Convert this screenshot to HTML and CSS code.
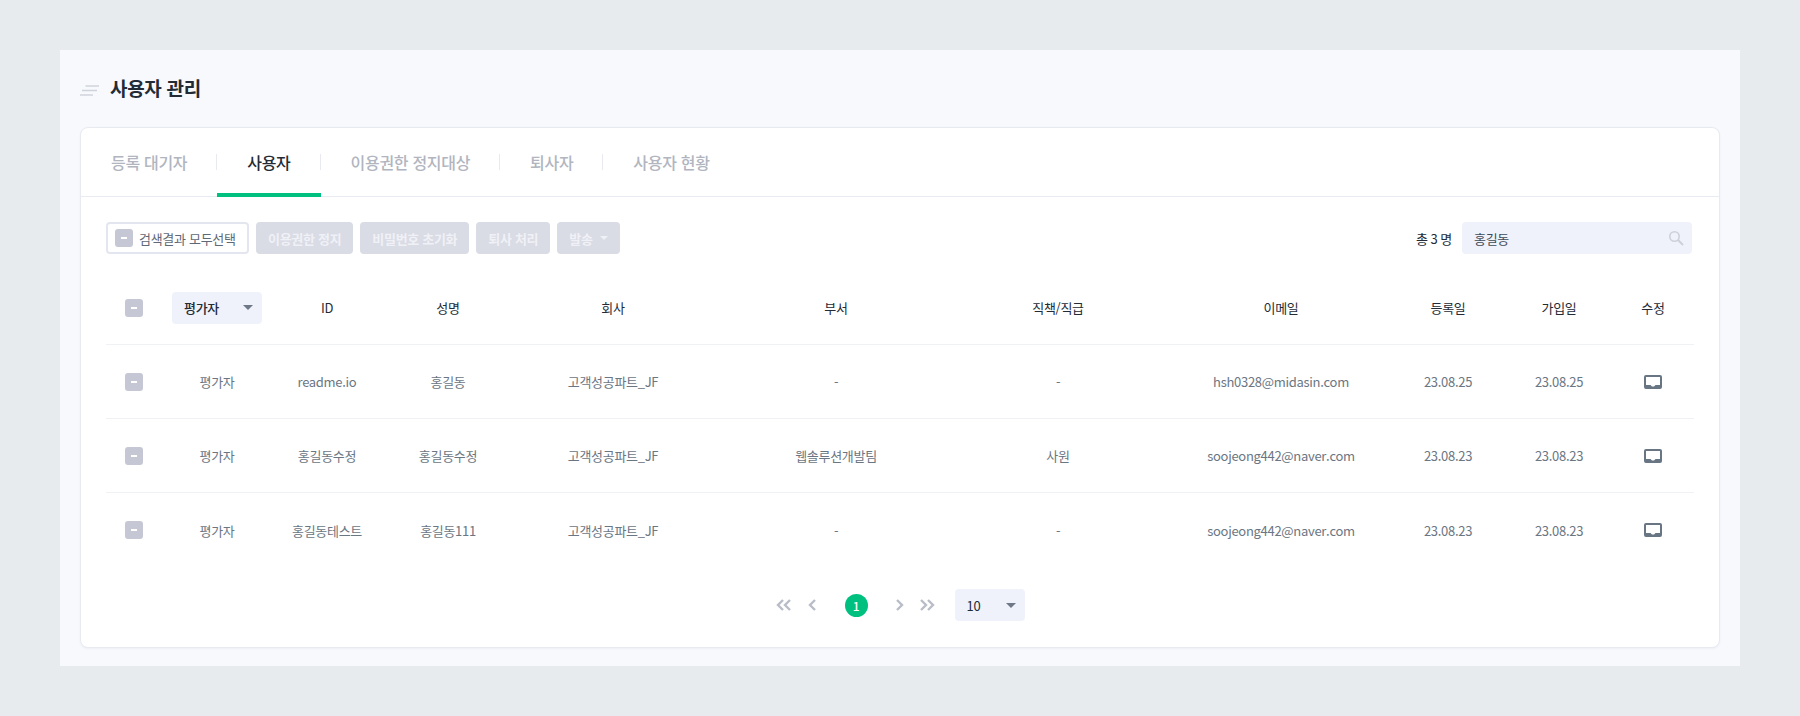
FILE: index.html
```html
<!DOCTYPE html>
<html lang="ko">
<head>
<meta charset="utf-8">
<title>사용자 관리</title>
<link rel="stylesheet" href="styles.css">
</head>
<body>
<main class="panel">
  <header class="page-head">
    <svg class="head-icon" width="19" height="11" viewBox="0 0 19 11"><path d="M5.500 1H19M2 5.500H17M0 10H13" stroke="#cfd3da" stroke-width="1.500" fill="none"/></svg>
    <h1>사용자 관리</h1>
  </header>
  <section class="card">
    <nav class="tabs">
      <a class="tab">등록 대기자</a>
      <a class="tab active">사용자</a>
      <a class="tab">이용권한 정지대상</a>
      <a class="tab">퇴사자</a>
      <a class="tab last">사용자 현황</a>
    </nav>
    <div class="body">
      <div class="toolbar">
        <label class="select-all"><span class="check"></span>검색결과 모두선택</label>
        <button class="btn">이용권한 정지</button>
        <button class="btn">비밀번호 초기화</button>
        <button class="btn">퇴사 처리</button>
        <button class="btn">발송<i class="caret caret-white"></i></button>
        <span class="total">총 3 명</span>
        <div class="search">
          <span>홍길동</span>
          <svg width="16" height="16" viewBox="0 0 16 16"><circle cx="6.500" cy="6.500" r="4.700" fill="none" stroke="#cdd0d9" stroke-width="1.600"/><path d="M10 10l5 5" stroke="#cdd0d9" stroke-width="2" fill="none"/></svg>
        </div>
      </div>
      <div class="row head">
        <div class="cell"><span class="check"></span></div>
        <div class="cell"><div class="role-select">평가자<i class="caret"></i></div></div>
        <div class="cell">ID</div><div class="cell">성명</div><div class="cell">회사</div><div class="cell">부서</div><div class="cell">직책/직급</div><div class="cell">이메일</div><div class="cell">등록일</div><div class="cell">가입일</div><div class="cell">수정</div>
      </div>
      <div class="row">
        <div class="cell"><span class="check"></span></div>
        <div class="cell">평가자</div><div class="cell">readme.io</div><div class="cell">홍길동</div><div class="cell">고객성공파트_JF</div><div class="cell">-</div><div class="cell">-</div><div class="cell">hsh0328@midasin.com</div><div class="cell">23.08.25</div><div class="cell">23.08.25</div>
        <div class="cell"><svg class="edit" width="18" height="14" viewBox="0 0 18 14"><path fill-rule="evenodd" d="M2 0H16a2 2 0 0 1 2 2V12a2 2 0 0 1-2 2H2a2 2 0 0 1-2-2V2a2 2 0 0 1 2-2ZM2 2V10H6.500L8 11.500H10L11.500 10H16V2Z" fill="#687583"/></svg></div>
      </div>
      <div class="row">
        <div class="cell"><span class="check"></span></div>
        <div class="cell">평가자</div><div class="cell">홍길동수정</div><div class="cell">홍길동수정</div><div class="cell">고객성공파트_JF</div><div class="cell">웹솔루션개발팀</div><div class="cell">사원</div><div class="cell">soojeong442@naver.com</div><div class="cell">23.08.23</div><div class="cell">23.08.23</div>
        <div class="cell"><svg class="edit" width="18" height="14" viewBox="0 0 18 14"><path fill-rule="evenodd" d="M2 0H16a2 2 0 0 1 2 2V12a2 2 0 0 1-2 2H2a2 2 0 0 1-2-2V2a2 2 0 0 1 2-2ZM2 2V10H6.500L8 11.500H10L11.500 10H16V2Z" fill="#687583"/></svg></div>
      </div>
      <div class="row no-line">
        <div class="cell"><span class="check"></span></div>
        <div class="cell">평가자</div><div class="cell">홍길동테스트</div><div class="cell">홍길동111</div><div class="cell">고객성공파트_JF</div><div class="cell">-</div><div class="cell">-</div><div class="cell">soojeong442@naver.com</div><div class="cell">23.08.23</div><div class="cell">23.08.23</div>
        <div class="cell"><svg class="edit" width="18" height="14" viewBox="0 0 18 14"><path fill-rule="evenodd" d="M2 0H16a2 2 0 0 1 2 2V12a2 2 0 0 1-2 2H2a2 2 0 0 1-2-2V2a2 2 0 0 1 2-2ZM2 2V10H6.500L8 11.500H10L11.500 10H16V2Z" fill="#687583"/></svg></div>
      </div>
      <div class="pager">
        <svg width="16" height="12" viewBox="0 0 16 12"><path d="M7 1L2 6l5 5M14 1L9 6l5 5" stroke="#b9bdc7" stroke-width="2.400" fill="none"/></svg>
        <svg class="p-prev" width="9" height="12" viewBox="0 0 9 12"><path d="M7 1L2 6l5 5" stroke="#b9bdc7" stroke-width="2.400" fill="none"/></svg>
        <span class="page-num">1</span>
        <svg class="p-next" width="9" height="12" viewBox="0 0 9 12"><path d="M2 1l5 5-5 5" stroke="#b9bdc7" stroke-width="2.400" fill="none"/></svg>
        <svg width="16" height="12" viewBox="0 0 16 12"><path d="M2 1l5 5-5 5M9 1l5 5-5 5" stroke="#b9bdc7" stroke-width="2.400" fill="none"/></svg>
        <div class="size-select">10<i class="caret"></i></div>
      </div>
    </div>
  </section>
</main>
</body>
</html>
```
FILE: styles.css
```css
* { box-sizing: border-box; }
html, body { margin: 0; height: 100%; }
body {
  background: #e8ebee;
  padding: 50px 60px;
  font-family: "Noto Sans CJK KR", "Noto Sans", sans-serif;
  font-size: 13px;
  letter-spacing: -0.3px;
  color: #6b7683;
}
.panel {
  height: 616px;
  background: #f8f9fd;
  padding: 0 20px;
}
.page-head {
  height: 77px;
  display: flex;
  align-items: center;
  gap: 11px;
  padding-bottom: 3px;
}
.head-icon { flex: none; margin-top: 6px; }
h1 {
  margin: 0;
  font-size: 19px;
  font-weight: 700;
  color: #232b36;
}
.card {
  height: 521px;
  background: #fff;
  border: 1px solid #e8eaf2;
  border-radius: 8px;
  box-shadow: 0 1px 2px rgba(120, 125, 150, 0.08);
}
.tabs {
  height: 69px;
  display: flex;
  border-bottom: 1px solid #e9ebf2;
}
.tab {
  position: relative;
  height: 68px;
  padding: 0 30px;
  display: flex;
  align-items: center;
  font-size: 16px;
  font-weight: 500;
  color: #b1b5c0;
}
.tab::after {
  content: "";
  position: absolute;
  right: 0;
  top: 26px;
  height: 16px;
  width: 1px;
  background: #e8eaf0;
}
.tab.last::after { display: none; }
.tab.active { color: #232b36; }
.tab.active::before {
  content: "";
  position: absolute;
  left: 0;
  right: 0;
  bottom: -1px;
  height: 4px;
  background: #00c07f;
}
.body { padding: 25px 25px 0; }
.toolbar {
  display: flex;
  align-items: center;
  gap: 7px;
  height: 32px;
  padding-right: 2px;
}
.check {
  display: inline-flex;
  align-items: center;
  justify-content: center;
  width: 18px;
  height: 18px;
  border-radius: 3px;
  background: #c5c8d4;
  flex: none;
}
.check::before {
  content: "";
  width: 6px;
  height: 2px;
  background: #fff;
}
.select-all {
  display: flex;
  align-items: center;
  gap: 6px;
  width: 143px;
  height: 32px;
  padding-left: 7px;
  border: 2px solid #e4e6ef;
  border-radius: 4px;
  color: #5f6875;
  white-space: nowrap;
}
.btn {
  height: 32px;
  padding: 0 12px;
  border: 0;
  border-radius: 4px;
  background: #d9dbe5;
  color: #f0f1f6;
  font-family: inherit;
  font-size: 13px;
  font-weight: 700;
  letter-spacing: inherit;
  display: flex;
  align-items: center;
}
.caret {
  display: inline-block;
  width: 0;
  height: 0;
  border: 5px solid transparent;
  border-top: 5px solid #6f7886;
  border-bottom: 0;
}
.caret-white { border-width: 4px 4px 0; border-top-color: #f0f1f6; margin-left: 7px; }
.total {
  margin-left: auto;
  margin-right: 3px;
  word-spacing: -0.5px;
  color: #232b36;
}
.search {
  width: 230px;
  height: 32px;
  background: #eff2fa;
  border-radius: 4px;
  display: flex;
  align-items: center;
  justify-content: space-between;
  padding: 0 8px 0 12px;
  color: #3f4a58;
}
.row {
  display: grid;
  grid-template-columns: 56px 110px 110px 132px 198px 248px 196px 250px 84px 138px 50px;
  height: 74px;
  border-bottom: 1px solid #f0f1f5;
  align-items: center;
}
.row.head { height: 91px; padding-top: 17px; color: #232b36; font-weight: 400; }
.row.no-line { border-bottom: 0; }
.cell { text-align: center; display: flex; justify-content: center; align-items: center; white-space: nowrap; }
.row .cell:first-child { justify-content: flex-start; padding-left: 19px; }
.role-select {
  width: 90px;
  height: 32px;
  background: #eff2fa;
  border-radius: 4px;
  display: flex;
  align-items: center;
  justify-content: space-between;
  padding: 0 9px 0 12px;
  color: #232b36;
  font-weight: 500;
}
.pager {
  display: flex;
  align-items: center;
  justify-content: center;
  height: 32px;
  margin-top: 22px;
}
.p-prev { margin-left: 16px; }
.p-next { margin-right: 15px; }
.page-num {
  width: 23px;
  height: 23px;
  margin: 0 27px 0 28px;
  border-radius: 50%;
  background: #00c07f;
  color: #fff;
  font-size: 12px;
  font-weight: 500;
  display: flex;
  align-items: center;
  justify-content: center;
}
.size-select {
  width: 70px;
  height: 32px;
  margin-left: 20px;
  background: #eff2fa;
  border-radius: 4px;
  display: flex;
  align-items: center;
  justify-content: space-between;
  padding: 0 9px 0 12px;
  color: #232b36;
}
```
